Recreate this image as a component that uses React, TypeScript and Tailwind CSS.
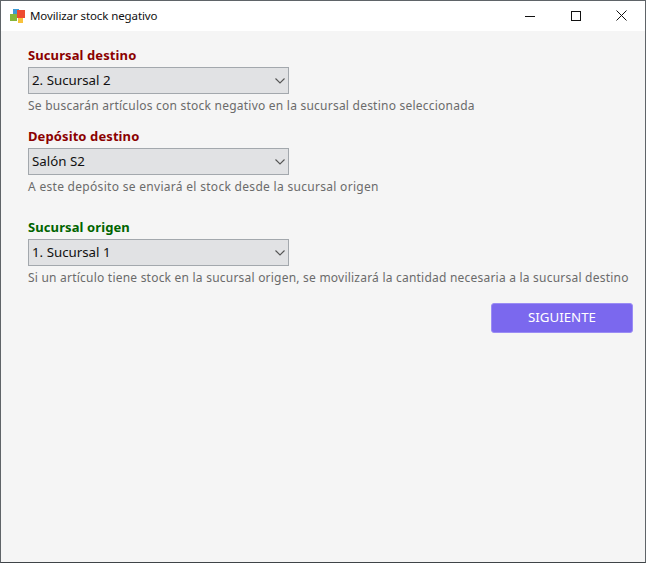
const font = { fontFamily: '"Noto Sans", "Open Sans", sans-serif' };

function Field({ label, color, value, hint, className, hintClass }: { label: string; color: string; value: string; hint: string; className: string; hintClass: string }) {
  return (
    <div className={`flex flex-col ${className}`}>
      <div className={`h-[21px] text-[13px] leading-[18px] tracking-[0.1px] font-bold ${color}`}>{label}</div>
      <div className="flex h-[27px] w-[261px] items-center justify-between border border-[#a3a8ad] bg-[#e1e2e4] pl-[3px] pr-[3px] text-[13.3px] text-[#111111]">
        <span>{value}</span>
        <svg width="10" height="6" viewBox="0 0 10 6" fill="none" stroke="#555555" strokeWidth="1.1"><path d="M0.5 0.5L5 5L9.5 0.5" /></svg>
      </div>
      <div className={`mt-[2px] whitespace-nowrap text-[12px] leading-[20px] text-[#6b6b6b] ${hintClass}`}>{hint}</div>
    </div>
  );
}

export default function App() {
  return (
    <div style={font} className="flex h-[563px] w-[646px] flex-col overflow-hidden border border-t-0 border-[#5f6468] border-b-[#3f4448] bg-[#f5f5f5]">
      <div className="flex h-[31px] shrink-0 items-center border-t border-[#5f6468] bg-white pl-[9px]">
        <svg width="16" height="16" viewBox="0 0 16 16" className="shrink-0">
          <rect x="3" y="1" width="6" height="6" fill="#3d9bd6" />
          <rect x="0" y="6" width="7" height="7" fill="#86b63a" />
          <rect x="7" y="2" width="8" height="8" fill="#ee4b30" />
          <rect x="8" y="10" width="5" height="5" fill="#f8c23c" />
        </svg>
        <span className="ml-[4px] text-[11.5px] tracking-[-0.1px] text-[#111111]">Movilizar stock negativo</span>
        <div className="ml-auto flex items-center">
          <svg width="46" height="30" viewBox="0 0 46 30" fill="none" stroke="#111111" strokeWidth="1"><path d="M18 15.5H28" /></svg>
          <svg width="46" height="30" viewBox="0 0 46 30" fill="none" stroke="#111111" strokeWidth="1"><rect x="18.5" y="10.5" width="9" height="9" /></svg>
          <svg width="46" height="30" viewBox="0 0 46 30" fill="none" stroke="#111111" strokeWidth="1"><path d="M17.5 9.5L27.5 19.5M27.5 9.5L17.5 19.5" /></svg>
        </div>
      </div>
      <div className="flex flex-col pl-[27px] pr-[12px]">
        <Field className="mt-[15px]" hintClass="tracking-[0.23px]" label="Sucursal destino" color="text-[#8b0000]" value="2. Sucursal 2" hint="Se buscarán artículos con stock negativo en la sucursal destino seleccionada" />
        <Field className="mt-[11px]" hintClass="tracking-[0.3px]" label="Depósito destino" color="text-[#8b0000]" value="Salón S2" hint="A este depósito se enviará el stock desde la sucursal origen" />
        <Field className="mt-[21px]" hintClass="tracking-[0.22px]" label="Sucursal origen" color="text-[#006400]" value="1. Sucursal 1" hint="Si un artículo tiene stock en la sucursal origen, se movilizará la cantidad necesaria a la sucursal destino" />
        <div className="mt-[15px] flex justify-end">
          <button className="flex h-[30px] w-[142px] items-center justify-center rounded-[3px] border border-[#9a8cf5] bg-[#7b68ee] text-[13.3px] text-white">SIGUIENTE</button>
        </div>
      </div>
    </div>
  );
}
